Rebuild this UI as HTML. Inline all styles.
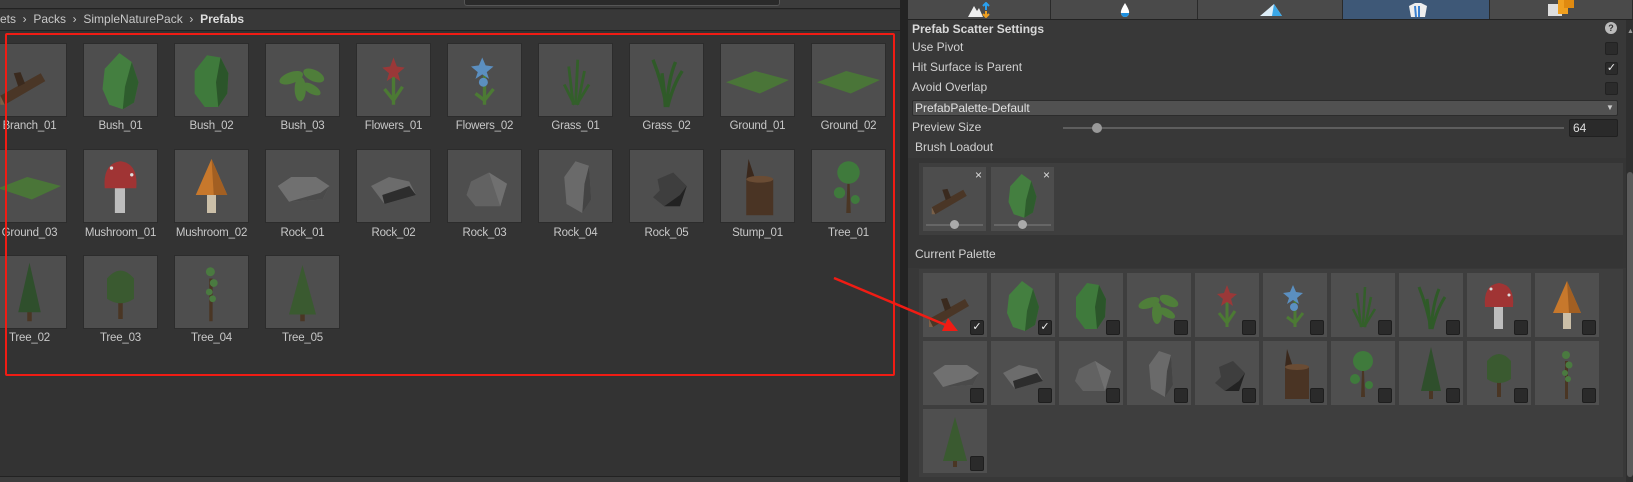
<!DOCTYPE html>
<html><head><meta charset="utf-8">
<style>
*{margin:0;padding:0;box-sizing:border-box}
body{width:1633px;height:482px;overflow:hidden;background:#333;font-family:"Liberation Sans",sans-serif;font-size:12px;color:#c4c4c4;position:relative}
.a{position:absolute}
.t{position:absolute;width:75px;height:74px;background:#4e4e4e;border:1px solid #2c2c2c}
.t svg,.p svg{width:100%;height:100%}
.l{position:absolute;width:91px;text-align:center;font-size:11.5px;color:#c8c8c8;letter-spacing:-0.2px}
.p{position:absolute;width:64px;height:64px;background:#4f4f4f}
.cb{position:absolute;width:14px;height:15px;background:#2a2a2a;border:1px solid #1e1e1e;border-radius:2px;right:3px;bottom:2px;color:#eee;font-size:11px;line-height:13px;text-align:center}
.row{position:absolute;left:912px;font-size:12px;color:#d2d2d2}
.chk{position:absolute;left:1605px;width:13px;height:13px;background:#2b2b2b;border:1px solid #222;border-radius:2px;color:#eee;font-size:11px;line-height:11px;text-align:center}
.tab{position:absolute;top:0;height:19px;background:#4a4a4a;border-right:1px solid #2a2a2a}
</style></head><body>
<svg width="0" height="0" style="position:absolute">
<defs>
<symbol id="branch" viewBox="0 0 64 64"><path d="M6 46 L42 26 L46 33 L10 54Z" fill="#4a3626"/><path d="M6 46 L10 54 L6 54Z" fill="#7a6048"/><path d="M22 38 L18 26 L24 25 L28 35Z" fill="#3a2a1e"/></symbol>
<symbol id="bush1" viewBox="0 0 64 64"><path d="M31 8 L42 16 L48 34 L44 52 L34 58 L22 54 L16 40 L18 22Z" fill="#447f40"/><path d="M42 16 L48 34 L44 52 L34 58 L36 38Z" fill="#2e5c2d"/></symbol>
<symbol id="bush2" viewBox="0 0 64 64"><path d="M28 10 L40 12 L47 26 L46 44 L38 56 L26 56 L17 44 L17 24Z" fill="#3f7a3c"/><path d="M40 12 L47 26 L46 44 L38 56 L36 34Z" fill="#2b552a"/></symbol>
<symbol id="bush3" viewBox="0 0 64 64"><g fill="#4f7e3a"><ellipse cx="22" cy="30" rx="11" ry="5" transform="rotate(-20 22 30)"/><ellipse cx="42" cy="28" rx="10" ry="5" transform="rotate(25 42 28)"/><ellipse cx="30" cy="40" rx="5" ry="11"/><ellipse cx="40" cy="40" rx="9" ry="4" transform="rotate(30 40 40)"/></g></symbol>
<symbol id="fl1" viewBox="0 0 64 64"><path d="M32 28 V54 M32 50 L24 40 M32 50 L40 38" stroke="#4c7a34" stroke-width="3" fill="none"/><path d="M32 12 L35 20 L42 21 L36 26 L38 33 L32 29 L26 33 L28 26 L22 21 L29 20Z" fill="#9a3838"/></symbol>
<symbol id="fl2" viewBox="0 0 64 64"><path d="M32 28 V54 M32 50 L40 40 M32 50 L24 44" stroke="#4c7a34" stroke-width="3" fill="none"/><path d="M30 12 L33 19 L40 20 L34 25 L36 31 L30 27 L24 31 L26 25 L20 20 L27 19Z" fill="#5b8fc0"/><circle cx="31" cy="34" r="4" fill="#5b8fc0"/></symbol>
<symbol id="gr1" viewBox="0 0 64 64"><path d="M30 54 L26 20 M32 54 L34 14 M34 54 L40 24 M31 54 L22 36 M33 54 L44 36" stroke="#335f2a" stroke-width="2.5" fill="none"/></symbol>
<symbol id="gr2" viewBox="0 0 64 64"><path d="M32 56 Q28 34 20 14 M32 56 Q34 30 40 16 M33 56 Q38 36 46 24 M31 56 Q30 40 28 26" stroke="#2f5a28" stroke-width="3" fill="none"/></symbol>
<symbol id="gd" viewBox="0 0 64 64"><path d="M4 34 L30 24 L60 32 L34 44Z" fill="#4a7538"/></symbol>
<symbol id="m1" viewBox="0 0 64 64"><rect x="27" y="32" width="9" height="24" fill="#bdbdbd"/><path d="M18 34 Q16 12 32 10 Q48 12 46 34Z" fill="#a03434"/><circle cx="24" cy="16" r="1.5" fill="#ddd"/><circle cx="42" cy="22" r="1.5" fill="#ddd"/></symbol>
<symbol id="m2" viewBox="0 0 64 64"><rect x="28" y="38" width="8" height="18" fill="#cbbfa8"/><path d="M32 8 L46 40 L18 40Z" fill="#c7782c"/><path d="M32 8 L46 40 L34 40Z" fill="#a25f22"/></symbol>
<symbol id="r1" viewBox="0 0 64 64"><path d="M10 32 L22 24 L44 24 L56 32 L50 44 L20 46Z" fill="#707070"/><path d="M20 46 L50 44 L56 32 L48 38Z" fill="#4a4a4a"/></symbol>
<symbol id="r2" viewBox="0 0 64 64"><path d="M12 32 L28 24 L46 28 L52 40 L24 48Z" fill="#6c6c6c"/><path d="M24 48 L52 40 L46 32 L22 40Z" fill="#2d2d2d"/></symbol>
<symbol id="r3" viewBox="0 0 64 64"><path d="M20 28 L36 20 L52 30 L46 50 L24 50 L16 40Z" fill="#626262"/><path d="M36 20 L52 30 L46 50Z" fill="#707070"/></symbol>
<symbol id="r4" viewBox="0 0 64 64"><path d="M32 10 L44 14 L46 44 L38 56 L24 48 L22 24Z" fill="#6a6a6a"/><path d="M44 14 L46 44 L38 56 L40 30Z" fill="#444"/></symbol>
<symbol id="r5" viewBox="0 0 64 64"><path d="M24 26 L38 20 L50 32 L44 50 L30 50 L20 42 L26 36Z" fill="#3e3e3e"/><path d="M44 50 L50 32 L44 40 L30 50Z" fill="#222"/></symbol>
<symbol id="st" viewBox="0 0 64 64"><rect x="22" y="26" width="24" height="32" fill="#4a3424"/><path d="M22 26 L24 8 L30 26Z" fill="#3a281c"/><ellipse cx="34" cy="26" rx="12" ry="3" fill="#6a4c34"/></symbol>
<symbol id="t1" viewBox="0 0 64 64"><path d="M31 30 L30 56 L34 56 L33 30Z" fill="#4a3624"/><circle cx="32" cy="20" r="10" fill="#3f7a3c"/><circle cx="24" cy="38" r="5" fill="#3f7a3c"/><circle cx="38" cy="44" r="4" fill="#3f7a3c"/></symbol>
<symbol id="t2" viewBox="0 0 64 64"><rect x="30" y="48" width="4" height="10" fill="#4a3624"/><path d="M32 6 L42 50 L22 50Z" fill="#2f4f2c"/></symbol>
<symbol id="t3" viewBox="0 0 64 64"><rect x="30" y="36" width="4" height="20" fill="#4a3624"/><path d="M20 20 Q32 6 44 20 L44 38 Q32 46 20 38Z" fill="#3a5a30"/></symbol>
<symbol id="t4" viewBox="0 0 64 64"><rect x="30" y="20" width="3" height="38" fill="#4a3624"/><circle cx="31" cy="14" r="4" fill="#4a7a40"/><circle cx="34" cy="24" r="3.5" fill="#4a7a40"/><circle cx="30" cy="32" r="3" fill="#4a7a40"/><circle cx="33" cy="38" r="3" fill="#4a7a40"/></symbol>
<symbol id="t5" viewBox="0 0 64 64"><rect x="30" y="50" width="4" height="8" fill="#4a3624"/><path d="M32 8 L44 52 L20 52Z" fill="#3a5a30"/></symbol>
</defs></svg>

<div class="a" style="left:0;top:0;width:900px;height:9px;background:#3c3c3c;border-bottom:1px solid #222"></div>
<div class="a" style="left:464px;top:0;width:316px;height:6px;background:#2a2a2a;border:1px solid #555;border-top:none;border-radius:0 0 3px 3px"></div>
<div class="a" style="left:0;top:10px;width:900px;height:21px;background:#383838;border-bottom:1px solid #222"></div>
<div class="a" style="left:0;top:12px;font-size:12px;color:#c8c8c8">ets &nbsp;›&nbsp; Packs &nbsp;›&nbsp; SimpleNaturePack &nbsp;›&nbsp; <b style="color:#ddd">Prefabs</b></div>
<div class="a" style="left:0;top:476px;width:900px;height:6px;background:#3c3c3c;border-top:1px solid #222"></div>

<div class="t" style="left:-8px;top:43px"><svg><use href="#branch"/></svg></div>
<div class="t" style="left:83px;top:43px"><svg><use href="#bush1"/></svg></div>
<div class="t" style="left:174px;top:43px"><svg><use href="#bush2"/></svg></div>
<div class="t" style="left:265px;top:43px"><svg><use href="#bush3"/></svg></div>
<div class="t" style="left:356px;top:43px"><svg><use href="#fl1"/></svg></div>
<div class="t" style="left:447px;top:43px"><svg><use href="#fl2"/></svg></div>
<div class="t" style="left:538px;top:43px"><svg><use href="#gr1"/></svg></div>
<div class="t" style="left:629px;top:43px"><svg><use href="#gr2"/></svg></div>
<div class="t" style="left:720px;top:43px"><svg><use href="#gd"/></svg></div>
<div class="t" style="left:811px;top:43px"><svg><use href="#gd"/></svg></div>
<div class="l" style="left:-16px;top:120px">Branch_01</div>
<div class="l" style="left:75px;top:120px">Bush_01</div>
<div class="l" style="left:166px;top:120px">Bush_02</div>
<div class="l" style="left:257px;top:120px">Bush_03</div>
<div class="l" style="left:348px;top:120px">Flowers_01</div>
<div class="l" style="left:439px;top:120px">Flowers_02</div>
<div class="l" style="left:530px;top:120px">Grass_01</div>
<div class="l" style="left:621px;top:120px">Grass_02</div>
<div class="l" style="left:712px;top:120px">Ground_01</div>
<div class="l" style="left:803px;top:120px">Ground_02</div>
<div class="t" style="left:-8px;top:149px"><svg><use href="#gd"/></svg></div>
<div class="t" style="left:83px;top:149px"><svg><use href="#m1"/></svg></div>
<div class="t" style="left:174px;top:149px"><svg><use href="#m2"/></svg></div>
<div class="t" style="left:265px;top:149px"><svg><use href="#r1"/></svg></div>
<div class="t" style="left:356px;top:149px"><svg><use href="#r2"/></svg></div>
<div class="t" style="left:447px;top:149px"><svg><use href="#r3"/></svg></div>
<div class="t" style="left:538px;top:149px"><svg><use href="#r4"/></svg></div>
<div class="t" style="left:629px;top:149px"><svg><use href="#r5"/></svg></div>
<div class="t" style="left:720px;top:149px"><svg><use href="#st"/></svg></div>
<div class="t" style="left:811px;top:149px"><svg><use href="#t1"/></svg></div>
<div class="l" style="left:-16px;top:227px">Ground_03</div>
<div class="l" style="left:75px;top:227px">Mushroom_01</div>
<div class="l" style="left:166px;top:227px">Mushroom_02</div>
<div class="l" style="left:257px;top:227px">Rock_01</div>
<div class="l" style="left:348px;top:227px">Rock_02</div>
<div class="l" style="left:439px;top:227px">Rock_03</div>
<div class="l" style="left:530px;top:227px">Rock_04</div>
<div class="l" style="left:621px;top:227px">Rock_05</div>
<div class="l" style="left:712px;top:227px">Stump_01</div>
<div class="l" style="left:803px;top:227px">Tree_01</div>
<div class="t" style="left:-8px;top:255px"><svg><use href="#t2"/></svg></div>
<div class="t" style="left:83px;top:255px"><svg><use href="#t3"/></svg></div>
<div class="t" style="left:174px;top:255px"><svg><use href="#t4"/></svg></div>
<div class="t" style="left:265px;top:255px"><svg><use href="#t5"/></svg></div>
<div class="l" style="left:-16px;top:332px">Tree_02</div>
<div class="l" style="left:75px;top:332px">Tree_03</div>
<div class="l" style="left:166px;top:332px">Tree_04</div>
<div class="l" style="left:257px;top:332px">Tree_05</div>

<div class="a" style="left:5px;top:33px;width:890px;height:343px;border:2.5px solid #f01c14;border-radius:2px"></div>

<div class="a" style="left:900px;top:0;width:8px;height:482px;background:#232323"></div>

<div class="a" style="left:908px;top:0;width:725px;height:482px;background:#383838"></div>
<div class="tab" style="left:908px;width:143px"></div>
<div class="tab" style="left:1051px;width:147px"></div>
<div class="tab" style="left:1198px;width:145px"></div>
<div class="tab" style="left:1343px;width:147px;background:#3e5877"></div>
<div class="tab" style="left:1490px;width:143px"></div>
<div class="a" style="left:908px;top:19px;width:725px;height:1px;background:#222"></div>
<svg class="a" style="left:966px;top:2px" width="30" height="16"><path d="M2 15 L8 4 L11 9 L13 6 L17 15Z" fill="#eee"/><path d="M20 1 V8 M17 4 L20 1 L23 4" stroke="#2aa0ee" stroke-width="2" fill="none"/><path d="M20 9 V15 M17 12 L20 15 L23 12" stroke="#f0a020" stroke-width="2" fill="none"/></svg>
<svg class="a" style="left:1119px;top:2px" width="12" height="16"><path d="M6 1 Q11 9 10 11 A4 4 0 0 1 2 11 Q1 9 6 1Z" fill="#fff"/><path d="M2 11 A4 4 0 0 0 10 11Z" fill="#1e90e0"/></svg>
<svg class="a" style="left:1258px;top:3px" width="26" height="14"><path d="M2 13 L16 1 L24 13Z" fill="#ddeef8"/><path d="M16 1 L24 13 L14 13Z" fill="#3aa8e8"/></svg>
<svg class="a" style="left:1405px;top:2px" width="24" height="16"><path d="M4 4 L10 1 L16 1 L22 4 L20 15 L6 15Z" fill="#eee"/><path d="M10 4 L11 15 M14 4 L14 15" stroke="#3a80d0" stroke-width="2"/></svg>
<svg class="a" style="left:1548px;top:0" width="30" height="16"><rect x="0" y="4" width="14" height="12" fill="#ddd"/><rect x="10" y="0" width="10" height="14" fill="#f0a020"/><rect x="16" y="0" width="10" height="8" fill="#e08a10"/></svg>

<div class="a" style="left:912px;top:22px;font-size:12px;font-weight:bold;color:#d8d8d8">Prefab Scatter Settings</div>
<div class="a" style="left:1605px;top:22px;width:12px;height:12px;border-radius:50%;background:#bbb;color:#333;font-size:9px;font-weight:bold;text-align:center;line-height:12px">?</div>
<div class="row" style="top:40px">Use Pivot</div>
<div class="row" style="top:60px">Hit Surface is Parent</div>
<div class="row" style="top:80px">Avoid Overlap</div>
<div class="chk" style="top:42px"></div>
<div class="chk" style="top:62px">✓</div>
<div class="chk" style="top:82px"></div>
<div class="a" style="left:912px;top:100px;width:706px;height:16px;background:#515151;border:1px solid #2c2c2c;border-radius:2px"></div>
<div class="a" style="left:915px;top:101px;font-size:12px;color:#e0e0e0">PrefabPalette-Default</div>
<div class="a" style="left:1606px;top:103px;font-size:8px;color:#ccc">▼</div>
<div class="row" style="top:120px">Preview Size</div>
<div class="a" style="left:1063px;top:127px;width:501px;height:2px;background:#5e5e5e"></div>
<div class="a" style="left:1092px;top:123px;width:10px;height:10px;border-radius:50%;background:#999"></div>
<div class="a" style="left:1569px;top:119px;width:49px;height:18px;background:#2a2a2a;border:1px solid #202020;border-radius:2px;padding:1px 3px;color:#ddd;font-size:12px">64</div>
<div class="row" style="top:140px;left:915px">Brush Loadout</div>
<div class="a" style="left:908px;top:158px;width:719px;height:80px;background:#353535"></div>
<div class="a" style="left:919px;top:163px;width:704px;height:72px;background:#3e3e3e"></div>
<div class="a" style="left:923px;top:167px;width:63px;height:64px;background:#4d4d4d"><svg style="width:63px;height:56px"><use href="#branch"/></svg><div class="a" style="right:4px;top:1px;font-size:12px;color:#ddd">×</div><div class="a" style="left:3px;top:57px;width:57px;height:2px;background:#666"></div><div class="a" style="left:27px;top:53px;width:9px;height:9px;border-radius:50%;background:#aaa"></div></div>
<div class="a" style="left:991px;top:167px;width:63px;height:64px;background:#4d4d4d"><svg style="width:63px;height:56px"><use href="#bush1"/></svg><div class="a" style="right:4px;top:1px;font-size:12px;color:#ddd">×</div><div class="a" style="left:3px;top:57px;width:57px;height:2px;background:#666"></div><div class="a" style="left:27px;top:53px;width:9px;height:9px;border-radius:50%;background:#aaa"></div></div>

<div class="a" style="left:908px;top:238px;width:719px;height:30px;background:#353535"></div>
<div class="row" style="top:247px;left:915px">Current Palette</div>
<div class="a" style="left:919px;top:269px;width:704px;height:208px;background:#3e3e3e"></div>
<div class="p" style="left:923px;top:273px"><svg><use href="#branch"/></svg><div class="cb">✓</div></div>
<div class="p" style="left:991px;top:273px"><svg><use href="#bush1"/></svg><div class="cb">✓</div></div>
<div class="p" style="left:1059px;top:273px"><svg><use href="#bush2"/></svg><div class="cb"></div></div>
<div class="p" style="left:1127px;top:273px"><svg><use href="#bush3"/></svg><div class="cb"></div></div>
<div class="p" style="left:1195px;top:273px"><svg><use href="#fl1"/></svg><div class="cb"></div></div>
<div class="p" style="left:1263px;top:273px"><svg><use href="#fl2"/></svg><div class="cb"></div></div>
<div class="p" style="left:1331px;top:273px"><svg><use href="#gr1"/></svg><div class="cb"></div></div>
<div class="p" style="left:1399px;top:273px"><svg><use href="#gr2"/></svg><div class="cb"></div></div>
<div class="p" style="left:1467px;top:273px"><svg><use href="#m1"/></svg><div class="cb"></div></div>
<div class="p" style="left:1535px;top:273px"><svg><use href="#m2"/></svg><div class="cb"></div></div>
<div class="p" style="left:923px;top:341px"><svg><use href="#r1"/></svg><div class="cb"></div></div>
<div class="p" style="left:991px;top:341px"><svg><use href="#r2"/></svg><div class="cb"></div></div>
<div class="p" style="left:1059px;top:341px"><svg><use href="#r3"/></svg><div class="cb"></div></div>
<div class="p" style="left:1127px;top:341px"><svg><use href="#r4"/></svg><div class="cb"></div></div>
<div class="p" style="left:1195px;top:341px"><svg><use href="#r5"/></svg><div class="cb"></div></div>
<div class="p" style="left:1263px;top:341px"><svg><use href="#st"/></svg><div class="cb"></div></div>
<div class="p" style="left:1331px;top:341px"><svg><use href="#t1"/></svg><div class="cb"></div></div>
<div class="p" style="left:1399px;top:341px"><svg><use href="#t2"/></svg><div class="cb"></div></div>
<div class="p" style="left:1467px;top:341px"><svg><use href="#t3"/></svg><div class="cb"></div></div>
<div class="p" style="left:1535px;top:341px"><svg><use href="#t4"/></svg><div class="cb"></div></div>
<div class="p" style="left:923px;top:409px"><svg><use href="#t5"/></svg><div class="cb"></div></div>

<div class="a" style="left:1626px;top:20px;width:7px;height:462px;background:#2f2f2f"></div>
<div class="a" style="left:1627px;top:172px;width:6px;height:305px;background:#5a5a5a;border-radius:3px"></div>
<div class="a" style="left:1627px;top:28px;font-size:7px;color:#999">▲</div>

<svg class="a" style="left:820px;top:270px" width="150" height="70"><line x1="14" y1="8" x2="128" y2="56" stroke="#f01c14" stroke-width="2.5"/><path d="M138 61 L122 61 L128 48Z" fill="#f01c14"/></svg>
</body></html>
